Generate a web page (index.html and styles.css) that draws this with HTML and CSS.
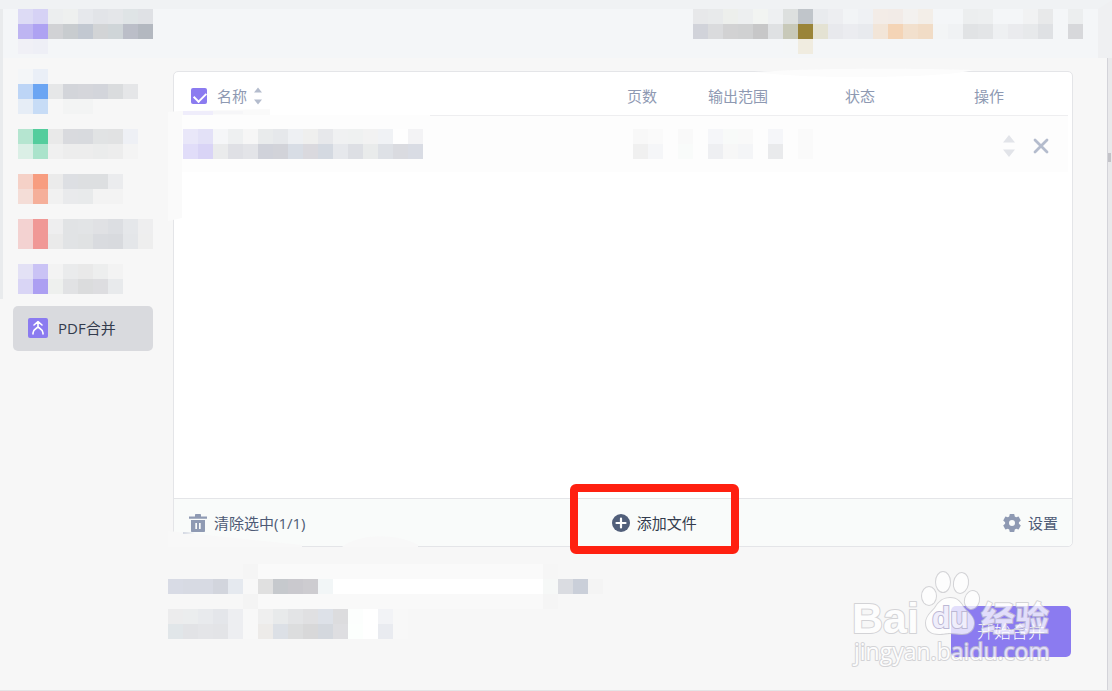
FILE: index.html
```html
<!DOCTYPE html>
<html lang="zh-CN">
<head>
<meta charset="utf-8">
<title>PDF合并</title>
<link rel="stylesheet" href="styles.css">
</head>
<body>
<div class="app">
  <header class="topbar">
    <svg class="mosaic" data-rows="dddbf5 d6d2f5 eceeef eef0ef e6e8ec e2e4e8 e4e6e9 dfe4e6 dfe1e5/beb5f2 aea2f2 d1d2d5 c8cccf c2c8d1 d2d4d6 cfd5d8 bbbec8 b3b8c0/f0f0f6 eeeff6"></svg>
    <svg class="mosaic" data-rows="e7e8ea e8eaeb edefec edeff0 f2f4f2 eef0f2 dde0df c0c5ca e9ebee edeef1 f2f4f6 eff1f4 f3ece7 f2ebe7 f3f1ef f3eee8 - - eceeef edeff0 - - f1f2f3 e8e9ea - eceeef/d1d3da dadbdd d2d2d3 d0d1d2 c7c7c8 dfe1e3 c8c9b9 9a8438 e4e2d3 e8e9ed ebecf0 e8eaee f2e5d8 f4d4b6 f2e0cd f1dcc6 f3f5f6 f0f2f4 e1e3e5 e3e5e7 eef0f2 eaebee e7e9eb dfe1e4 - d7d8db/- - - - - - f4f6f7 f0ece0"></svg>
  </header>
  <div class="body">
    <nav class="sidebar">
      <a class="item first" href="#" aria-label="1"><svg class="mosaic" data-rows="f4f6f8 eaeff7/bdd5f6 6ba5f3 e6e7e8 d3d5da d5d6db d3d5db dadcde e5e6e8/e6edf6 c7dcf6 - f3f4f4 f3f4f4"></svg></a>
      <a class="item" href="#" aria-label="2"><svg class="mosaic" data-rows="b5e5d0 54cd9d e9e9e9 d9dade d8dade e1e3e4 e1e2e3 eef0f5/dbefe6 aae3cb f0f0f0 ededed ededed ebecec ededed f4f4f4"></svg></a>
      <a class="item" href="#" aria-label="3"><svg class="mosaic" data-rows="f5d1c7 f79d80 ebebeb dddfe3 dddfe1 dddfe1 ebecee/f4ddd7 f5af9a f1f1f1 e9eaec e8eaeb f3f3f3 f3f3f3"></svg></a>
      <a class="item" href="#" aria-label="4"><svg class="mosaic" data-rows="f3d2d1 f09896 eeeeef e1e3e5 e2e4e6 e0e1e4 dcdee2 e5e7ea eeeeef/f3d2d1 f09896 eaeaea e1e3e5 e0e2e3 d9dbdf d8dade e4e6e9 eeeeee"></svg></a>
      <a class="item" href="#" aria-label="5"><svg class="mosaic" data-rows="e3e1f5 cac3f5 f3f3f3 eaebec e9e9e9 edeeee f3f3f3/d9d5f5 ac9ff2 eef0ee e1e2e4 dbdcdd dddde0 e8eaec"></svg></a>
      <a class="item active" href="#">
        <svg class="merge" viewBox="0 0 20 20" aria-hidden="true"><rect width="20" height="20" rx="2" fill="#8b7bf0"/><path d="M10 4v5.500M6 7l4-3.400L14 7M5 16v-1c0-2.500 1.500-3.500 3-4.500L10 9l2 1.500c1.500 1 3 2 3 4.500v1" fill="none" stroke="#fff" stroke-width="1.600" stroke-linejoin="round" stroke-linecap="round"/></svg>
        <span>PDF合并</span>
      </a>
    </nav>
    <main class="main">
      <section class="panel">
        <div class="list">
          <table class="files">
            <colgroup><col><col class="c-pages"><col class="c-range"><col class="c-state"><col class="c-ops"></colgroup>
            <thead>
              <tr>
                <th class="name"><div class="name-head"><input type="checkbox" id="all" class="check" checked><label for="all">名称</label>
                  <svg class="sort" viewBox="0 0 8 18" aria-hidden="true"><path d="M4 .5L8 5.500H0zM4 17.500L0 12.500h8z" fill="#b4bccd"/></svg></div></th>
                <th>页数</th><th>输出范围</th><th>状态</th><th>操作</th>
              </tr>
            </thead>
            <tbody>
              <tr>
                <td class="cell-name"><svg class="mosaic" data-rows="e9e7f9 e3e1f7 f5f6f8 eef0f1 f6f6f6 e9ebec e6e8eb eef0f3 efefee e7e8eb f0f1f2 eff1f1 f2f2f2 f0f2f5 fefefe f3f3f5/e1ddf9 d9d4f6 eaebec dfe0e5 e3e4e8 d0d2da d2d3d9 d8dde5 dad9de d4d9e1 e6e8ec dddfe4 e9ebeb dee1e6 dadbe0 d9dce4"></svg></td>
                <td class="cell-pages"><svg class="mosaic" data-rows="f8f8f8 fafafa/f0f0f0 f5f6f8"></svg></td>
                <td class="cell-range"><svg class="mosaic" data-rows="f9f9f9 - f5f6f9 f8faf9 f9f9f9 - f5f6f9 - fafafa/f9fbfa - eeeff2 f7f7f7 f4f5f7 - e9eaec - fafafa"></svg></td>
                <td></td>
                <td><div class="ops">
                  <button class="plain" type="button" aria-label="排序"><svg class="move" viewBox="0 0 12 22" aria-hidden="true"><path d="M6 0l6 7.500H0zM6 22L0 14.500h12z" fill="#e2e4e9"/></svg></button>
                  <button class="plain" type="button" aria-label="移除"><svg class="close" viewBox="0 0 16 16" aria-hidden="true"><path d="M2 2l12 12M14 2L2 14" stroke="#b4bccd" stroke-width="2.800" stroke-linecap="round"/></svg></button>
                </div></td>
              </tr>
            </tbody>
          </table>
        </div>
        <footer class="toolbar">
          <button class="tool clear" type="button">
            <svg class="trash" viewBox="0 0 18 18" aria-hidden="true"><path d="M0 2.500h6V1c0-.6.4-1 1-1h4c.6 0 1 .4 1 1v1.500h6v2.300H0z" fill="#8f9ab3"/><path d="M2 6h14v11c0 .6-.4 1-1 1H3c-.6 0-1-.4-1-1zM6.300 9v6h1.700V9zM10 9v6h1.700V9z" fill="#8f9ab3" fill-rule="evenodd"/></svg>
            <span>清除选中(1/1)</span>
          </button>
          <button class="tool add" type="button">
            <svg class="plus" viewBox="0 0 18 18" aria-hidden="true"><circle cx="9" cy="9" r="9" fill="#515f7a"/><path d="M9 4.500v9M4.500 9h9" stroke="#fff" stroke-width="2.200" stroke-linecap="round"/></svg>
            <span>添加文件</span>
            <span class="marker"></span>
          </button>
          <button class="tool settings" type="button">
            <svg class="gear" viewBox="0 0 18 18" aria-hidden="true"><path d="M6.800 0h4.400l.6 2.500 1.300.8 2.500-.8 2.200 3.900-1.900 1.800v1.600l1.900 1.800-2.200 3.900-2.500-.8-1.300.8-.6 2.500H6.800l-.6-2.500-1.300-.8-2.500.8L.2 11.600l1.900-1.800V8.200L.2 6.400l2.200-3.900 2.500.8 1.300-.8zM9 6a3 3 0 1 0 0 6 3 3 0 0 0 0-6z" fill="#8f9ab3" fill-rule="evenodd"/></svg>
            <span>设置</span>
          </button>
        </footer>
        <svg class="smudge left" width="300" height="160" aria-hidden="true"><path d="M0 40L12 39 102 37V44H14V146L0 149z" fill="#fafafa"/><path d="M15 39h30v4H15z" fill="#efedfb"/><path d="M45 39h30v3H45z" fill="#f6f6f8"/><path d="M14 43h248v3H14z" fill="#fdfdfd"/></svg>
        <svg class="smudge right" width="220" height="12" aria-hidden="true"><path d="M0 4C60 0 150 0 220 2C190 10 60 12 0 4z" fill="#fcfcfc"/></svg>
        <svg class="smudge low" width="250" height="16" aria-hidden="true"><path d="M0 0L10 1 134 14V16H0zM174 16C190 2 230 2 250 14V16z" fill="#f8f8f8"/><path d="M15 1l12 1-12 1z" fill="#d3d8e2"/></svg>
      </section>
      <section class="bottom">
        <svg class="mosaic" data-rows="- - - - - f5f5f5 fafafa*19 f6f6f6/d8dbe5 d7dae3 d7dae3 d2d5dd e5e9ef f8f8f8 e0e0e0 c6c9cd cac9ce cdccd0 f2f6f7 ffffff*14 f6f8f7 dadce1 cacfd9 f4f4f4/- - - - - f4f4f4 f9f9f9*19 f5f5f5/ececed ebedee e8eaed e4e6ea edeef1 f8f8f8 efefef e8eaeb e3e4e6 e0e0e2 dde1e8 dcdcde fcfefd ffffff f2f3f6 f8f8f8/e1e6e9 e2e3e6 e4e5e8 e3e4e7 edeef1 f8f8f8 edebe9 dce0e6 dcddde d8d8d9 d4d8de dedee1 fcfffd ffffff e9ebf0 f8f8f8"></svg>
        <button class="start" type="button">开始合并</button>
      </section>
    </main>
  </div>
  <svg class="watermark" viewBox="0 0 212 110" role="img" aria-label="Baidu 经验">
    <g class="wm">
      <ellipse cx="79" cy="31" rx="7" ry="9"/>
      <ellipse cx="93" cy="17" rx="7" ry="10"/>
      <ellipse cx="111" cy="18" rx="7" ry="10" transform="rotate(10 111 18)"/>
      <ellipse cx="122" cy="35" rx="7" ry="9" transform="rotate(15 122 35)"/>
      <path d="M100 33c-8 0-12 5-15 10-4 5-9 8-9 15 0 8 6 11 13 11 5 0 7-1 11-1s7 1 12 1c8 0 12-5 12-11 0-7-6-10-10-15-3-5-6-10-14-10z"/>
      <text class="wm-logo" x="2" y="68">Bai</text>
      <text class="wm-cn" x="131" y="66">经验</text>
      <text class="wm-url" x="4" y="95">jingyan.baidu.com</text>
    </g>
    <text class="wm-du" x="82" y="63">du</text>
  </svg>
</div>
<script src="mosaic.js"></script>
</body>
</html>
```
FILE: styles.css
```css
* { box-sizing: border-box; }
body {
  margin: 0;
  background: #f7f7f7;
  color: #333b4d;
  font: 400 15px/22px "Open Sans", "Noto Sans CJK SC", sans-serif;
}
button { font: inherit; color: inherit; border: 0; background: none; padding: 0; cursor: pointer; }
svg { display: block; flex: none; }
.app {
  position: relative;
  display: flex;
  flex-direction: column;
  min-height: 100vh;
  border-bottom: 1px solid #e4e4e6;
}
.app::before {
  content: "";
  position: absolute;
  left: 0; top: 9px;
  width: 3px; height: 290px;
  background: #e9ebed;
}
.app::after {
  content: "";
  position: absolute;
  right: 0; top: 58px; bottom: 0;
  width: 4px;
  background: linear-gradient(#c3c3c8, #c3c3c8) 0 95px / 3px 9px no-repeat, #e9e9eb;
  border-left: 1px solid #d3d3d9;
}
.topbar {
  display: flex;
  justify-content: space-between;
  height: 58px;
  padding: 0 15px 0 18px;
  border-top: 9px solid #f0f2f4;
  border-right: 14px solid #eff0f2;
  background: #f4f6f8;
}
.body { display: flex; flex: 1; }
.sidebar { width: 173px; padding: 11px 20px 0 13px; }
.item {
  display: flex;
  align-items: flex-start;
  height: 45px;
  padding: 3px 0 0 5px;
  color: #333b4d;
  text-decoration: none;
}
.item.first { height: 57px; padding-top: 0; }
.item.active {
  align-items: center;
  gap: 10px;
  padding: 0 15px 2px;
  border-radius: 5px;
  background: #d9dade;
}
.merge { width: 20px; height: 20px; }
.main { display: flex; flex: 1; flex-direction: column; min-width: 0; padding: 13px 39px 0 0; }
.panel {
  position: relative;
  display: flex;
  flex: 1;
  flex-direction: column;
  border: 1px solid #e4e5e8;
  border-radius: 5px;
  background: #fff;
}
.list { flex: 1; padding-right: 4px; }
.files { width: 100%; table-layout: fixed; border-collapse: separate; border-spacing: 0; }
.c-pages { width: 48px; }
.c-range { width: 144px; }
.c-state { width: 100px; }
.c-ops { width: 158px; }
.files th {
  height: 44px;
  padding: 4px 0 0;
  border-bottom: 1px solid #eeeef0;
  color: #8e99b2;
  font-weight: 400;
  text-align: center;
}
.name-head { display: flex; align-items: center; padding-left: 17px; }
.check {
  appearance: none;
  width: 16px;
  height: 16px;
  margin: 0 10px 0 0;
  border-radius: 2px;
  background: #8b7bf0;
}
.check:checked::before {
  content: "";
  display: block;
  width: 10px;
  height: 6px;
  margin: 4px 3px;
  border: solid #fff;
  border-width: 0 0 2px 2px;
  transform: rotate(-45deg);
}
.sort { width: 8px; height: 18px; margin-left: 7px; }
.files td { height: 56px; padding: 0; background: #fdfdfd; }
.cell-name .mosaic { margin-left: 9px; }
.cell-pages .mosaic { margin-left: 15px; }
.cell-range .mosaic { margin-left: 12px; }
.ops { display: flex; justify-content: flex-end; align-items: center; gap: 18px; padding: 4px 19px 0 0; }
.move { width: 12px; height: 22px; }
.close { width: 16px; height: 16px; }
.toolbar {
  display: flex;
  justify-content: space-between;
  align-items: center;
  height: 48px;
  padding: 0 14px 0 15px;
  border-top: 1px solid #e4e5e8;
  border-radius: 0 0 5px 5px;
  background: #f9fbfa;
}
.tool { position: relative; display: flex; align-items: center; gap: 7px; color: #4d5a75; }
.trash, .plus, .gear { width: 18px; height: 18px; }
.add { color: #333b4d; }
.marker {
  position: absolute;
  inset: -28px -42px -20px -42px;
  border: 8px solid #ff2010;
  border-radius: 6px;
}
.smudge { position: absolute; pointer-events: none; }
.smudge.left { left: -6px; top: 0; }
.smudge.right { right: 98px; top: -4px; }
.smudge.low { left: -6px; bottom: -1px; }
.bottom {
  display: flex;
  justify-content: space-between;
  align-items: flex-end;
  padding: 17px 2px 33px 0;
}
.bottom .mosaic { margin: 0 0 18px -5px; }
.start {
  width: 120px;
  height: 51px;
  border-radius: 5px;
  background: #8b7bf0;
  color: #fff;
  font-size: 17px;
  font-weight: 300;
}
.watermark {
  position: absolute;
  right: 50px;
  bottom: 15px;
  width: 212px;
  height: 110px;
  pointer-events: none;
}
.wm { fill: #fff; stroke: #c8c8cc; stroke-width: 2px; stroke-linejoin: round; paint-order: stroke; opacity: .75; }
.wm-logo { font: 700 43px "Liberation Sans", sans-serif; }
.wm-cn { font: 700 34px "Noto Sans CJK SC", sans-serif; }
.wm-url { font: 400 23px "Open Sans", sans-serif; }
.wm-du { font: 700 30px "Liberation Sans", sans-serif; fill: #f0eefb; stroke: #bcb8d4; stroke-width: 2px; paint-order: stroke; }
```
FILE: mosaic.js
```js
// Builds the pixelated blocks. Rows are split by "/", cells by spaces;
// "-" leaves a cell empty and "colour*n" spans n cells.
const CELL = 15;
const NS = "http://www.w3.org/2000/svg";

document.querySelectorAll(".mosaic").forEach((svg) => {
  const rows = svg.dataset.rows.split("/");
  let columns = 0;
  rows.forEach((row, y) => {
    let x = 0;
    row.split(" ").forEach((cell) => {
      const [colour, count] = cell.split("*");
      const span = Number(count || 1);
      if (colour !== "-") {
        const rect = document.createElementNS(NS, "rect");
        rect.setAttribute("x", x * CELL);
        rect.setAttribute("y", y * CELL);
        rect.setAttribute("width", span * CELL);
        rect.setAttribute("height", CELL);
        rect.setAttribute("fill", "#" + colour);
        svg.appendChild(rect);
      }
      x += span;
    });
    columns = Math.max(columns, x);
  });
  svg.setAttribute("width", columns * CELL);
  svg.setAttribute("height", rows.length * CELL);
  svg.setAttribute("aria-hidden", "true");
});
```
